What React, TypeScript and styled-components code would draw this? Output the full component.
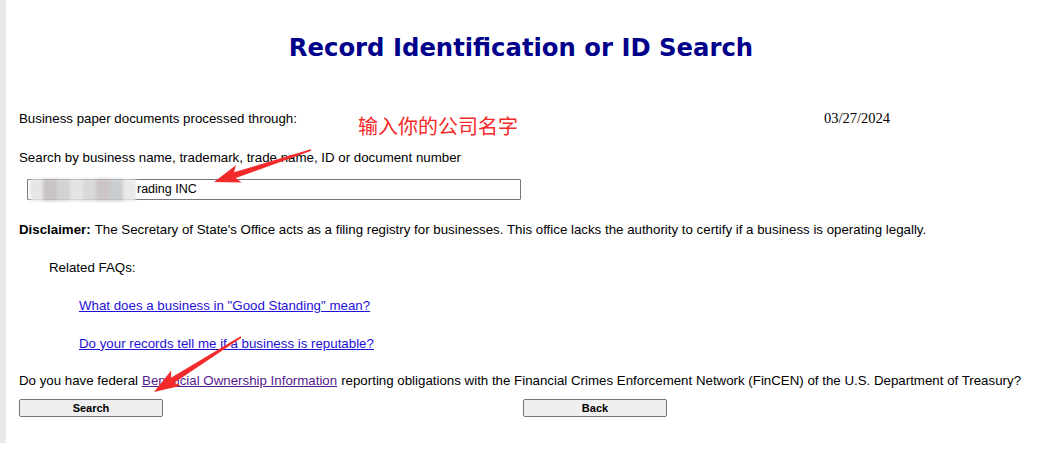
import React from "react";
import styled, { createGlobalStyle } from "styled-components";

const GlobalStyle = createGlobalStyle`
  html, body {
    margin: 0;
    padding: 0;
    background: #fff;
  }
  body {
    font-family: "Liberation Sans", Arial, sans-serif;
    font-size: 13.3px;
    color: #000;
  }
`;

const Page = styled.div`
  position: relative;
  display: flex;
  width: 1040px;
  height: 451px;
  overflow: hidden;
`;

const Strip = styled.div`
  width: 6px;
  height: 443px;
  background: #e8e8e8;
  flex: none;
`;

const Content = styled.div`
  flex: 1;
  display: flex;
  flex-direction: column;
  padding-left: 13px;
`;

const Title = styled.h1`
  margin: 0 0 0 -17px;
  height: 99px;
  padding-bottom: 3px;
  box-sizing: border-box;
  line-height: 96px;
  text-align: center;
  font-family: "DejaVu Sans", Verdana, sans-serif;
  font-weight: bold;
  font-size: 24.3px;
  color: #00008b;
`;

const Line = styled.div<{ $h: number; $indent?: number }>`
  height: ${(p) => p.$h}px;
  display: flex;
  align-items: center;
  padding-left: ${(p) => p.$indent ?? 0}px;
  white-space: nowrap;
`;

const DateRow = styled.div`
  height: 39px;
  display: grid;
  grid-template-columns: 805px auto;
  align-items: center;
`;

const DateText = styled.span`
  font-family: "Liberation Serif", "Times New Roman", serif;
  font-size: 14.5px;
`;

const InputRow = styled.div`
  position: relative;
  height: 26px;
  display: flex;
  align-items: center;
  padding-left: 8px;
  margin-bottom: 8px;
`;

const TextInput = styled.input`
  width: 494px;
  height: 21px;
  box-sizing: border-box;
  border: 1px solid #767676;
  border-radius: 1px;
  padding: 0 0 0 109px;
  font-family: "Liberation Sans", Arial, sans-serif;
  font-size: 12.5px;
  color: #000;
  background: #fff;
  outline: none;
`;

const Mosaic = styled.div`
  position: absolute;
  left: 11px;
  top: 3px;
  width: 106px;
  height: 22px;
  display: flex;
  border-radius: 4px;
  filter: blur(1.6px);
`;

const Tile = styled.div<{ $c: string }>`
  flex: 1;
  background: ${(p) => p.$c};
`;

const Bold = styled.b`
  font-weight: bold;
  margin-right: 4px;
`;

const Link = styled.a<{ $visited?: boolean }>`
  color: ${(p) => (p.$visited ? "#551a8b" : "#1f10d8")};
  text-decoration: underline;
  cursor: pointer;
`;

const Gap = styled.span`
  display: inline-block;
  width: 4px;
`;

const ButtonRow = styled.div`
  display: grid;
  grid-template-columns: 504px 144px;
  align-items: start;
`;

const Button = styled.button`
  width: 144px;
  height: 18px;
  padding: 0;
  background: #efefef;
  border: 1px solid #767676;
  border-radius: 2px;
  font-family: "Liberation Sans", Arial, sans-serif;
  font-weight: bold;
  font-size: 11px;
  color: #000;
`;

const Note = styled.div`
  position: absolute;
  left: 358px;
  top: 111px;
  font-family: "Noto Sans CJK SC", "Microsoft YaHei", sans-serif;
  font-size: 20px;
  color: #f52828;
  pointer-events: none;
`;

const Overlay = styled.svg`
  position: absolute;
  left: 0;
  top: 0;
  pointer-events: none;
`;

// builds a tapered arrow polygon from tail to tip
const arrowPoints = (tx: number, ty: number, hx: number, hy: number) => {
  const dx = hx - tx;
  const dy = hy - ty;
  const len = Math.hypot(dx, dy);
  const ux = dx / len;
  const uy = dy / len;
  const nx = -uy;
  const ny = ux;
  const headLen = 26;
  const headW = 9;
  const neckW = 3;
  const tailW = 0.8;
  const bx = hx - ux * headLen;
  const by = hy - uy * headLen;
  const pts = [
    [tx + nx * tailW, ty + ny * tailW],
    [bx + ux * 4 + nx * neckW, by + uy * 4 + ny * neckW],
    [bx + nx * headW, by + ny * headW],
    [hx, hy],
    [bx - nx * headW, by - ny * headW],
    [bx + ux * 4 - nx * neckW, by + uy * 4 - ny * neckW],
    [tx - nx * tailW, ty - ny * tailW],
  ];
  return pts.map((p) => p.map((v) => v.toFixed(1)).join(",")).join(" ");
};

const tiles = ["#e6e6e6", "#c9c4c4", "#d3d3d6", "#e6e4e2", "#d9d9d9", "#cdc5c5", "#c9ccd1", "#e9e9e9"];

const App = () => {
  return (
    <>
      <GlobalStyle />
      <Page>
        <Strip />
        <Content>
          <Title>Record Identification or ID Search</Title>
          <DateRow>
            <span>Business paper documents processed through:</span>
            <DateText>03/27/2024</DateText>
          </DateRow>
          <Line $h={38}>Search by business name, trademark, trade name, ID or document number</Line>
          <InputRow>
            <TextInput readOnly value="rading INC" />
            <Mosaic>
              {tiles.map((c, i) => (
                <Tile key={i} $c={c} />
              ))}
            </Mosaic>
          </InputRow>
          <Line $h={38}>
            <Bold>Disclaimer:</Bold>
            The Secretary of State's Office acts as a filing registry for businesses. This office lacks the authority to
            certify if a business is operating legally.
          </Line>
          <Line $h={38} $indent={30}>Related FAQs:</Line>
          <Line $h={38} $indent={60}>
            <Link>What does a business in "Good Standing" mean?</Link>
          </Line>
          <Line $h={38} $indent={60}>
            <Link>Do your records tell me if a business is reputable?</Link>
          </Line>
          <Line $h={37}>
            Do you have federal<Gap />
            <Link $visited>Beneficial Ownership Information</Link>
            <Gap />reporting obligations with the Financial Crimes Enforcement Network (FinCEN) of the U.S. Department of
            Treasury?
          </Line>
          <ButtonRow>
            <Button>Search</Button>
            <Button>Back</Button>
          </ButtonRow>
        </Content>
        <Note>输入你的公司名字</Note>
        <Overlay width="1040" height="451">
          <polygon points={arrowPoints(311, 150, 214, 182)} fill="#f42a2a" />
          <polygon points={arrowPoints(241, 337, 154, 392)} fill="#f42a2a" />
        </Overlay>
      </Page>
    </>
  );
};

export default App;
